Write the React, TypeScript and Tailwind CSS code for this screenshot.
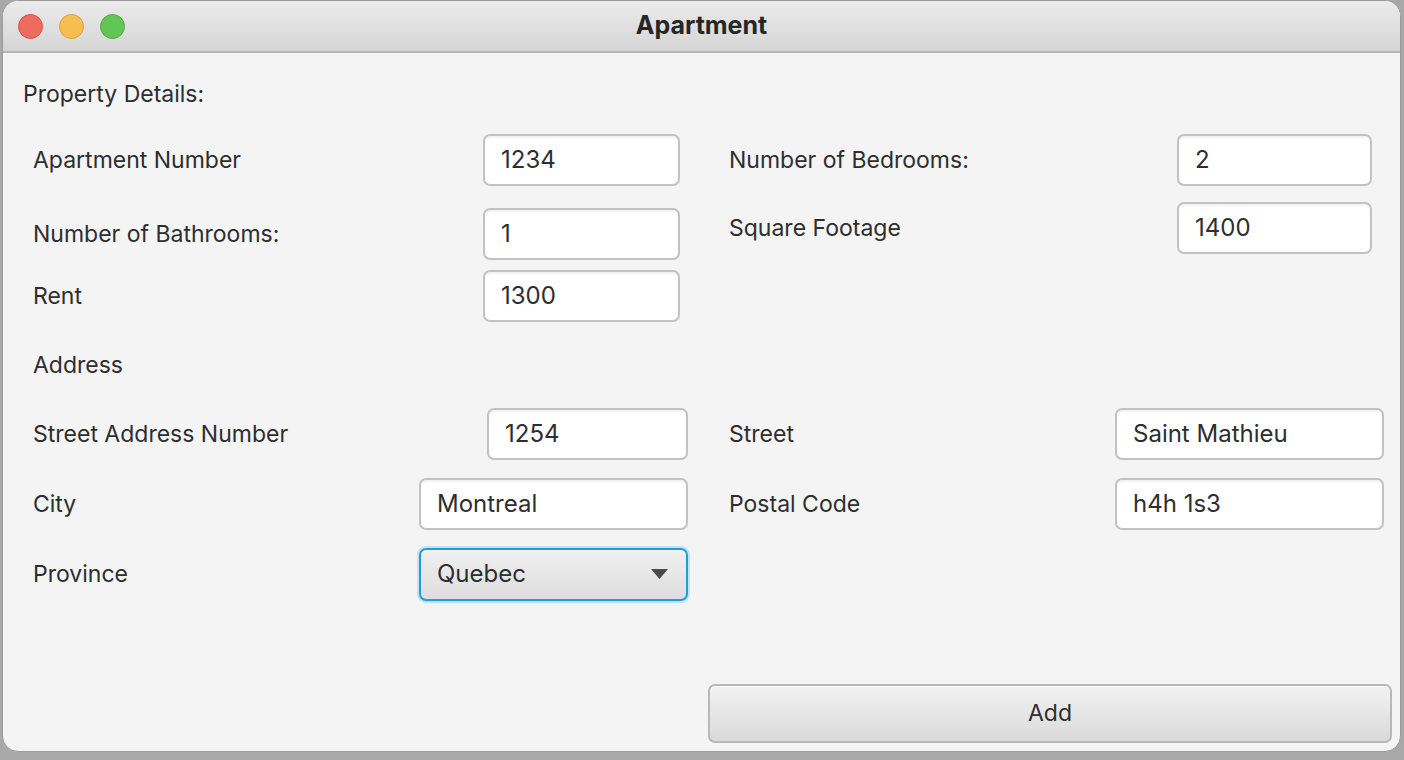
import React from 'react'

const font = { fontFamily: 'Inter, "Liberation Sans", sans-serif' }

function Field({ value, w }: { value: string; w: string }) {
    return (
        <div className={`${w} h-[52px] bg-white border-2 border-[#c2c2c2] rounded-[7px] shadow-[inset_0_2px_2px_rgba(0,0,0,0.06)] flex items-center pl-[16px] text-[24px] text-[#2e2e2e]`}>
            {value}
        </div>
    )
}

function Label({ text, w }: { text: string; w: string }) {
    return <div className={`${w} shrink-0 text-[23px] text-[#2e2e2e] whitespace-nowrap`}>{text}</div>
}

export default function App() {
    return (
        <div className="w-[1404px] h-[760px] bg-[#a8a8a8] pl-[2px] overflow-hidden" style={font}>
            <div className="w-[1399px] h-[752px] rounded-[16px] overflow-hidden bg-[#f4f4f4] border border-[#9a9a9a] flex flex-col">
                {/* title bar */}
                <div className="h-[52px] shrink-0 bg-gradient-to-b from-[#ebebeb] to-[#d5d5d5] border-b-2 border-[#b6b6b6] flex items-center relative">
                    <div className="flex items-center gap-[16px] pl-[15px]">
                        <span className="w-[25px] h-[25px] rounded-full bg-[#ee6b5f] border border-[#d65448]" />
                        <span className="w-[25px] h-[25px] rounded-full bg-[#f6be50] border border-[#d9a23c]" />
                        <span className="w-[25px] h-[25px] rounded-full bg-[#62c655] border border-[#4fab41]" />
                    </div>
                    <div className="absolute inset-0 flex items-center justify-center text-[25px] font-bold text-[#262626]">Apartment</div>
                </div>

                {/* content */}
                <div className="flex flex-col">
                    <div className="mt-[27px] ml-[20px] text-[23px] leading-[28px] text-[#2e2e2e]">Property Details:</div>

                    <div className="flex mt-[26px] pl-[30px]">
                        <div className="flex flex-col w-[696px]">
                            <div className="flex items-center h-[52px]">
                                <Label text="Apartment Number" w="w-[450px]" />
                                <Field value="1234" w="w-[197px]" />
                            </div>
                            <div className="flex items-center h-[52px] mt-[22px]">
                                <Label text="Number of Bathrooms:" w="w-[450px]" />
                                <Field value="1" w="w-[197px]" />
                            </div>
                            <div className="flex items-center h-[52px] mt-[10px]">
                                <Label text="Rent" w="w-[450px]" />
                                <Field value="1300" w="w-[197px]" />
                            </div>
                        </div>
                        <div className="flex flex-col">
                            <div className="flex items-center h-[52px]">
                                <Label text="Number of Bedrooms:" w="w-[448px]" />
                                <Field value="2" w="w-[195px]" />
                            </div>
                            <div className="flex items-center h-[52px] mt-[16px]">
                                <Label text="Square Footage" w="w-[448px]" />
                                <Field value="1400" w="w-[195px]" />
                            </div>
                        </div>
                    </div>

                    <div className="ml-[30px] mt-[29px] text-[23px] leading-[28px] text-[#2e2e2e]">Address</div>

                    <div className="flex mt-[29px] pl-[30px]">
                        <div className="flex flex-col w-[696px]">
                            <div className="flex items-center h-[52px]">
                                <Label text="Street Address Number" w="w-[454px]" />
                                <Field value="1254" w="w-[201px]" />
                            </div>
                            <div className="flex items-center h-[52px] mt-[18px]">
                                <Label text="City" w="w-[386px]" />
                                <Field value="Montreal" w="w-[269px]" />
                            </div>
                            <div className="flex items-center h-[52px] mt-[18px]">
                                <Label text="Province" w="w-[386px]" />
                                <div className="w-[269px] h-[53px] rounded-[7px] border-2 border-[#1aa0dc] shadow-[0_0_0_2px_rgba(140,205,240,0.45)] bg-gradient-to-b from-[#f0f0f0] to-[#dedede] flex items-center justify-between pl-[16px] pr-[18px] text-[24px] text-[#2e2e2e]">
                                    <span>Quebec</span>
                                    <svg width="17" height="10" viewBox="0 0 17 10">
                                        <path d="M0 0 L17 0 L8.5 10 Z" fill="#4a4a4a" />
                                    </svg>
                                </div>
                            </div>
                        </div>
                        <div className="flex flex-col">
                            <div className="flex items-center h-[52px]">
                                <Label text="Street" w="w-[386px]" />
                                <Field value="Saint Mathieu" w="w-[269px]" />
                            </div>
                            <div className="flex items-center h-[52px] mt-[18px]">
                                <Label text="Postal Code" w="w-[386px]" />
                                <Field value="h4h 1s3" w="w-[269px]" />
                            </div>
                        </div>
                    </div>

                    <div className="flex justify-end mt-[84px] pr-[8px]">
                        <button className="w-[684px] h-[59px] rounded-[7px] border-2 border-[#b8b8b8] bg-gradient-to-b from-[#f2f2f2] to-[#dadada] shadow-[inset_0_1px_0_#ffffff] text-[23px] text-[#2e2e2e]">
                            Add
                        </button>
                    </div>
                </div>
            </div>
        </div>
    )
}
